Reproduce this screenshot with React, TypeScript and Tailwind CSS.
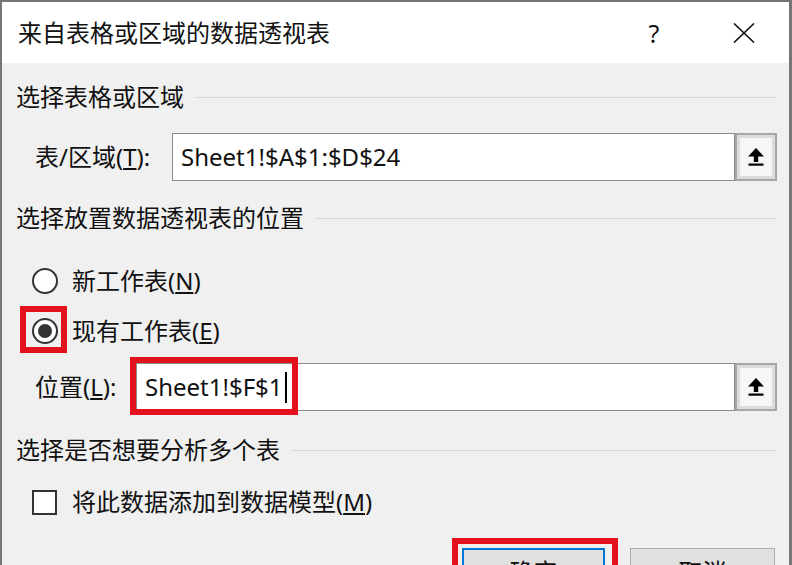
import React from "react";

function SectionHeader({ children, className = "" }: { children: React.ReactNode; className?: string }) {
  return (
    <div className={"flex items-center h-8 shrink-0 " + className}>
      <span className="whitespace-nowrap">{children}</span>
      <div className="flex-1 h-px bg-[#d6d6d6] ml-[11px]" />
    </div>
  );
}

function UploadButton() {
  return (
    <div className="w-[42px] h-12 shrink-0 border-2 border-[#a6a6a6] bg-[#dcdcdc] p-[3px] flex">
      <div className="flex-1 bg-[#f6f6f6] flex items-center justify-center">
        <svg width="18" height="20" viewBox="0 0 18 20">
          <polygon points="9,1 17,9.5 1,9.5" fill="#000" />
          <rect x="6.8" y="8.5" width="4.4" height="6.5" fill="#000" />
          <rect x="1.5" y="16.5" width="15" height="2.2" fill="#000" />
        </svg>
      </div>
    </div>
  );
}

function Radio({ checked }: { checked?: boolean }) {
  return (
    <div className="w-[26px] h-[26px] shrink-0 rounded-full border-2 border-[#333333] bg-white flex items-center justify-center">
      {checked && <div className="w-[14px] h-[14px] rounded-full bg-[#333333]" />}
    </div>
  );
}

export default function App() {
  return (
    <div className="w-[792px] h-[565px] overflow-hidden bg-[#f0f0f0] border-l-2 border-t-2 border-r-[3px] border-[#767676] font-['Noto_Sans','Noto_Sans_CJK_SC',sans-serif] text-[24px] leading-8 text-[#111111] flex flex-col">
      {/* Title bar */}
      <div className="h-[61px] shrink-0 bg-white flex items-center pl-4">
        <div className="flex-1 whitespace-nowrap">来自表格或区域的数据透视表</div>
        <div className="w-[90px] flex justify-center text-[25px] text-[#111]">?</div>
        <div className="w-[90px] flex justify-center">
          <svg width="22" height="20" viewBox="0 0 22 20">
            <line x1="1" y1="0.5" x2="21" y2="19.5" stroke="#111" strokeWidth="1.6" />
            <line x1="21" y1="0.5" x2="1" y2="19.5" stroke="#111" strokeWidth="1.6" />
          </svg>
        </div>
      </div>

      {/* Body */}
      <div className="flex-1 flex flex-col pl-[14px] pr-[12px]">
        <SectionHeader className="mt-[18px]">选择表格或区域</SectionHeader>

        <div className="mt-[20px] flex items-center h-12 shrink-0">
          <div className="w-[156px] pl-[19px] shrink-0 whitespace-nowrap">
            表/区域(<span className="underline underline-offset-2">T</span>):
          </div>
          <div className="flex-1 h-12 bg-white border border-[#8c8c8c] flex items-center pl-2 whitespace-nowrap">
            Sheet1!$A$1:$D$24
          </div>
          <UploadButton />
        </div>

        <SectionHeader className="mt-[21px]">选择放置数据透视表的位置</SectionHeader>

        <div className="mt-[27px] flex items-center h-10 shrink-0 pl-4 gap-[14px]">
          <Radio />
          <span className="whitespace-nowrap">
            新工作表(<span className="underline underline-offset-2">N</span>)
          </span>
        </div>

        <div className="mt-[10px] flex items-center h-10 shrink-0 pl-4 gap-[14px]">
          <div className="relative">
            <Radio checked />
            <div className="absolute left-[-12px] top-[-12px] w-[47px] h-[47px] border-[6px] border-[#e3121c]" />
          </div>
          <span className="whitespace-nowrap">
            现有工作表(<span className="underline underline-offset-2">E</span>)
          </span>
        </div>

        <div className="mt-[12px] flex items-center h-12 shrink-0">
          <div className="w-[120px] pl-[19px] shrink-0 whitespace-nowrap">
            位置(<span className="underline underline-offset-2">L</span>):
          </div>
          <div className="relative flex-1 h-12 bg-white border border-[#8c8c8c] flex items-center pl-2 whitespace-nowrap">
            Sheet1!$F$1
            <span className="inline-block w-[2px] h-[31px] bg-black ml-[2px]" />
            <div className="absolute left-[-7px] top-[-7px] w-[168px] h-[58px] border-[6px] border-[#e3121c]" />
          </div>
          <UploadButton />
        </div>

        <SectionHeader className="mt-[23px]">选择是否想要分析多个表</SectionHeader>

        <div className="mt-[16px] flex items-center h-10 shrink-0 pl-4 gap-[15px]">
          <div className="w-[25px] h-[25px] shrink-0 border-2 border-[#333333] bg-white" />
          <span className="whitespace-nowrap">
            将此数据添加到数据模型(<span className="underline underline-offset-2">M</span>)
          </span>
        </div>

        <div className="mt-[26px] flex justify-end gap-[25px] pr-[2px] shrink-0">
          <div className="relative">
            <div className="w-[143px] h-12 border-2 border-[#0078d7] bg-[#e1e1e1] flex items-center justify-center">
              确定
            </div>
            <div className="absolute left-[-10px] top-[-10px] right-[-13px] h-[70px] border-[6px] border-[#e3121c]" />
          </div>
          <div className="w-[145px] h-12 border border-[#adadad] bg-[#e1e1e1] flex items-center justify-center">
            取消
          </div>
        </div>
      </div>
    </div>
  );
}
